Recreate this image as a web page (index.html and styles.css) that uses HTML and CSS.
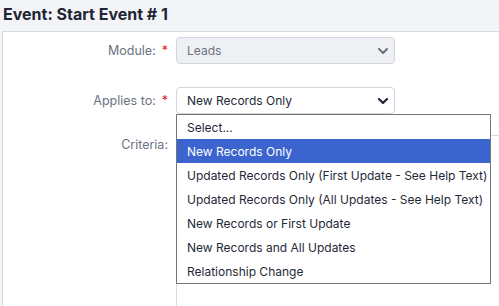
FILE: index.html
```html
<!DOCTYPE html>
<html>
<head>
<meta charset="utf-8">
<link rel="stylesheet" href="styles.css">
</head>
<body>
<h1 class="title">Event: Start Event # 1</h1>
<div class="card">
  <div class="row row-module">
    <div class="label">Module:<span class="req">*</span></div>
    <div class="select disabled">
      <span>Leads</span>
      <svg class="chev" width="10" height="6" viewBox="0 0 10 6"><path d="M1 1l4 4 4-4" fill="none" stroke="#6b7280" stroke-width="2" stroke-linecap="round" stroke-linejoin="round"/></svg>
    </div>
  </div>
  <div class="row row-applies">
    <div class="label">Applies to:<span class="req">*</span></div>
    <div class="control">
      <div class="select">
        <span>New Records Only</span>
        <svg class="chev" width="10" height="6" viewBox="0 0 10 6"><path d="M1 1l4 4 4-4" fill="none" stroke="#1f2937" stroke-width="2.2" stroke-linecap="round" stroke-linejoin="round"/></svg>
      </div>
      <ul class="listbox">
        <li>Select...</li>
        <li class="active">New Records Only</li>
        <li>Updated Records Only (First Update - See Help Text)</li>
        <li>Updated Records Only (All Updates - See Help Text)</li>
        <li>New Records or First Update</li>
        <li>New Records and All Updates</li>
        <li>Relationship Change</li>
      </ul>
    </div>
  </div>
  <div class="row row-criteria">
    <div class="label label-plain">Criteria:</div>
    <div class="criteria-box"></div>
  </div>
</div>
</body>
</html>
```
FILE: styles.css
```css
html, body {
  margin: 0;
  padding: 0;
}
body {
  background: #f3f4f8;
  font-family: Inter, "Noto Sans", sans-serif;
  width: 499px;
  height: 306px;
  overflow: hidden;
}
.title {
  margin: 0;
  padding: 4px 0 0 3px;
  height: 27px;
  font-size: 16px;
  font-weight: 700;
  color: #1f2533;
}
.card {
  margin-left: 2px;
  width: 540px;
  height: 400px;
  background: #fff;
  border: 1px solid #d5dae3;
  box-sizing: border-box;
  padding-top: 5px;
}
.row {
  display: grid;
  grid-template-columns: 165px 219px;
  column-gap: 8px;
  align-items: center;
}
.row-applies {
  margin-top: 23px;
}
.row-criteria {
  margin-top: 21px;
  grid-template-columns: 165px 1fr;
  align-items: start;
}
.label {
  text-align: right;
  font-size: 12.5px;
  color: #6b7280;
}
.req {
  color: #e0201e;
  margin-left: 6px;
}
.label-plain {
  padding-top: 2px;
}
.control {
  position: relative;
}
.select {
  height: 27px;
  box-sizing: border-box;
  border: 1px solid #d1d6de;
  border-radius: 4px;
  background: #fff;
  display: flex;
  align-items: center;
  justify-content: space-between;
  padding: 0 6px 0 10px;
  font-size: 12px;
  color: #1f2937;
}
.select.disabled {
  background: #eef0f4;
  color: #6b7280;
}
.chev {
  display: block;
}
.listbox {
  position: absolute;
  left: 0;
  top: 27px;
  width: 315px;
  box-sizing: border-box;
  margin: 0;
  padding: 0;
  list-style: none;
  background: #fff;
  border: 1px solid #767676;
  z-index: 2;
}
.listbox li {
  height: 24px;
  line-height: 26px;
  padding-left: 10px;
  font-size: 12px;
  color: #1f2937;
  white-space: nowrap;
}
.listbox li.active {
  background: #3b64ce;
  color: #fff;
}
.criteria-box {
  height: 200px;
  border-top: 1px solid #d8dce4;
  border-left: 1px solid #d8dce4;
}
```
